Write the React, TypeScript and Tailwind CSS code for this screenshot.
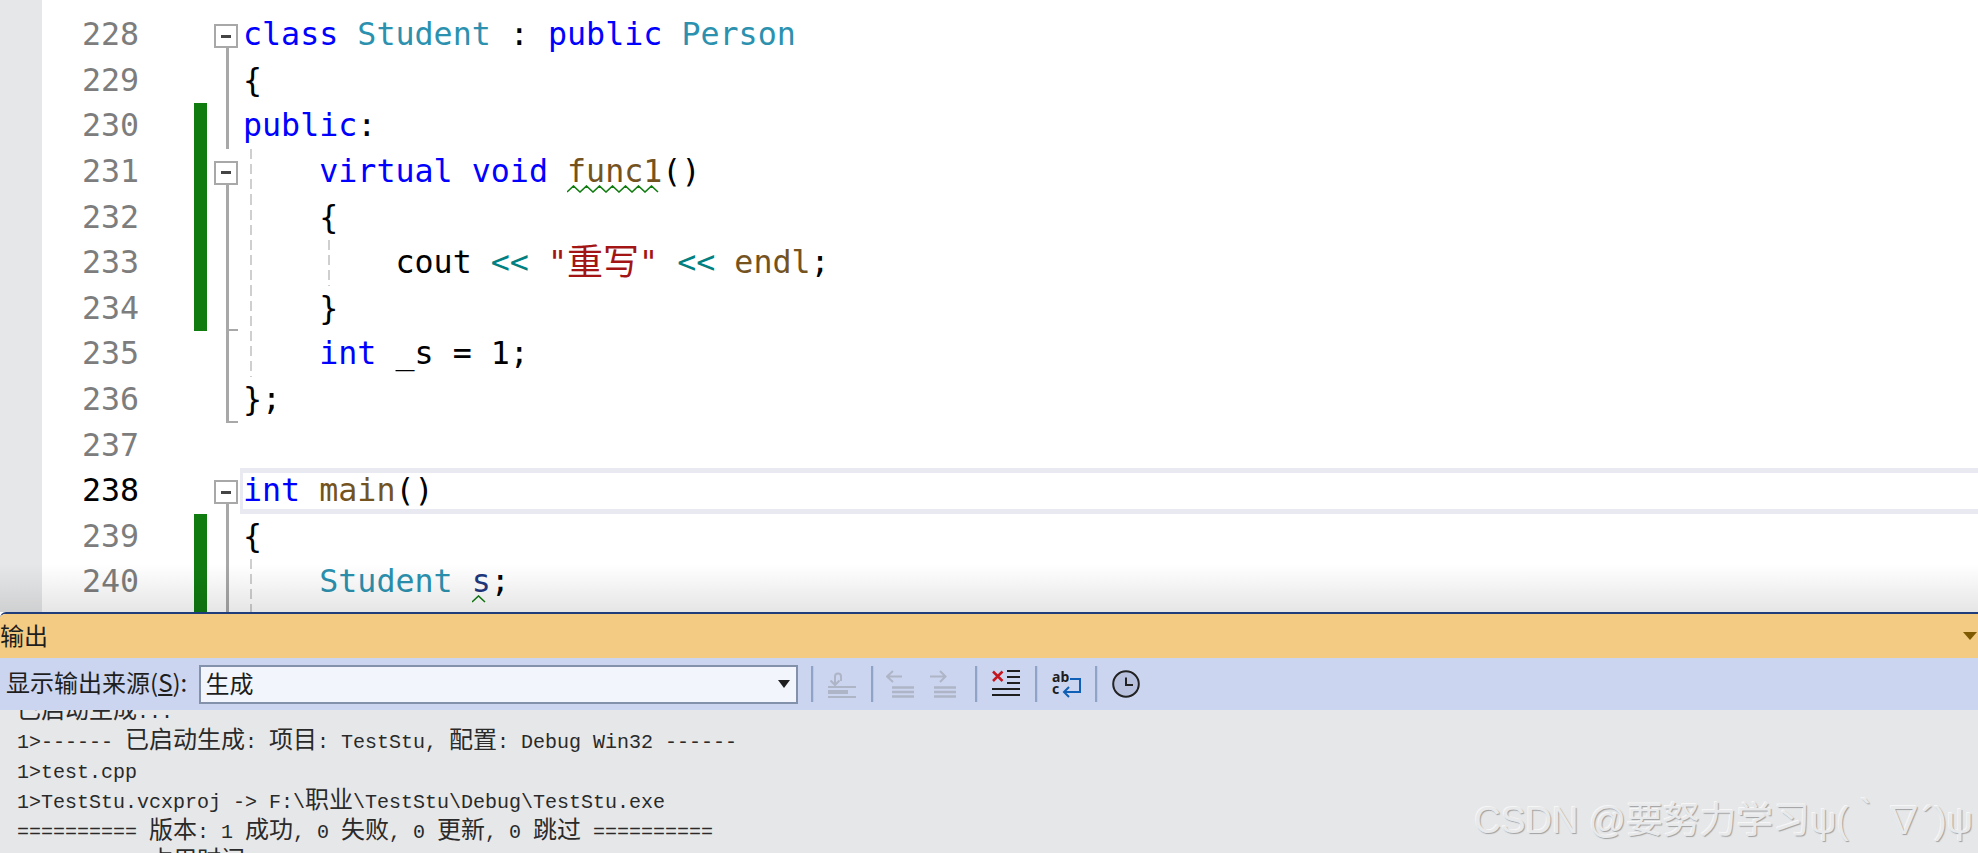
const KW = 'text-[#0000ff]';
const TYPE = 'text-[#2b91af]';
const FN = 'text-[#74531f]';
const STR = 'text-[#a31515]';
const STR_CN = 'text-[#a31515] text-[36px]';
const OP = 'text-[#008080]';
const VAR = 'text-[#1f377f]';
const PLAIN = 'text-black';

type Token = [string, string, boolean?];
type Fold = 'none' | 'box' | 'line' | 'tick' | 'endTick';

interface CodeRow {
  num: number;
  changed?: boolean;
  fold: Fold;
  guideA?: boolean;
  guideB?: boolean;
  current?: boolean;
  tokens: Token[];
}

const rows: CodeRow[] = [
  { num: 228, fold: 'box', tokens: [['class', KW], [' ', PLAIN], ['Student', TYPE], [' : ', PLAIN], ['public', KW], [' ', PLAIN], ['Person', TYPE]] },
  { num: 229, fold: 'line', tokens: [['{', PLAIN]] },
  { num: 230, changed: true, fold: 'line', tokens: [['public', KW], [':', PLAIN]] },
  { num: 231, changed: true, fold: 'box', guideA: true, tokens: [['    ', PLAIN], ['virtual', KW], [' ', PLAIN], ['void', KW], [' ', PLAIN], ['func1', FN, true], ['()', PLAIN]] },
  { num: 232, changed: true, fold: 'line', guideA: true, tokens: [['    {', PLAIN]] },
  { num: 233, changed: true, fold: 'line', guideA: true, guideB: true, tokens: [['        cout ', PLAIN], ['<<', OP], [' ', PLAIN], ['"', STR], ['重写', STR_CN], ['"', STR], [' ', PLAIN], ['<<', OP], [' ', PLAIN], ['endl', FN], [';', PLAIN]] },
  { num: 234, changed: true, fold: 'tick', guideA: true, tokens: [['    }', PLAIN]] },
  { num: 235, fold: 'line', guideA: true, tokens: [['    ', PLAIN], ['int', KW], [' _s = 1;', PLAIN]] },
  { num: 236, fold: 'endTick', tokens: [['};', PLAIN]] },
  { num: 237, fold: 'none', tokens: [] },
  { num: 238, fold: 'box', current: true, tokens: [['int', KW], [' ', PLAIN], ['main', FN], ['()', PLAIN]] },
  { num: 239, changed: true, fold: 'line', tokens: [['{', PLAIN]] },
  { num: 240, changed: true, fold: 'line', guideA: true, tokens: [['    ', PLAIN], ['Student', TYPE], [' ', PLAIN], ['s', VAR, true], [';', PLAIN]] },
  { num: 241, changed: true, fold: 'line', guideA: true, tokens: [] },
];

const guideBg =
  'bg-[repeating-linear-gradient(to_bottom,#cfcfcf_0,#cfcfcf_10px,transparent_10px,transparent_15px)]';

function Squiggle({ word }: { word: string }) {
  const w = word.length * 19 - 3;
  const step = 6.5;
  let points = '';
  for (let i = 0; i * step <= w; i++) {
    points += `${i * step},${i % 2 === 0 ? 7 : 1} `;
  }
  return (
    <svg className="absolute left-0 top-[37px]" width={w} height="8" viewBox={`0 0 ${w} 8`}>
      <polyline points={points} fill="none" stroke="#107c10" strokeWidth="1.6" />
    </svg>
  );
}

function FoldCell({ fold }: { fold: Fold }) {
  if (fold === 'none') return <div className="w-[26px] shrink-0" />;
  return (
    <div className="relative w-[26px] shrink-0">
      {fold === 'box' ? (
        <>
          <div className="absolute left-0 top-[12px] z-10 flex h-[24px] w-[24px] items-center justify-center border-2 border-[#a8a8a8] bg-white">
            <div className="h-[3px] w-[10px] bg-[#444444]" />
          </div>
          <div className="absolute bottom-0 left-[12px] top-[36px] w-[3px] bg-[#a8a8a8]" />
        </>
      ) : (
        <div className="absolute inset-y-0 left-[12px] w-[3px] bg-[#a8a8a8]" />
      )}
      {(fold === 'tick' || fold === 'endTick') && (
        <div className="absolute bottom-0 left-[12px] h-[2px] w-[12px] bg-[#a8a8a8]" />
      )}
    </div>
  );
}

function EditorRow({ row }: { row: CodeRow }) {
  return (
    <div className="flex h-[45.6px] shrink-0">
      <div className={`ml-[82px] w-[57px] shrink-0 text-left leading-[45.6px] ${row.current ? 'text-black' : 'text-[#7d7d7d]'}`}>
        {row.num}
      </div>
      <div className="ml-[55px] w-[13px] shrink-0">
        {row.changed && <div className="h-full bg-[#107c10]" />}
      </div>
      <div className="ml-[7px] flex shrink-0">
        <FoldCell fold={row.fold} />
      </div>
      <div className={`relative flex flex-1 items-center whitespace-pre ${row.current ? 'border-y-[5px] border-l-[3px] border-[#e9e9f2]' : 'pl-[3px]'}`}>
        {row.guideA && <div className={`absolute inset-y-0 left-[10px] w-[2px] ${guideBg}`} />}
        {row.guideB && <div className={`absolute inset-y-0 left-[88px] w-[2px] ${guideBg}`} />}
        {row.tokens.map((t, i) => (
          <span key={i} className={`relative ${t[1]}`}>
            {t[0]}
            {t[2] && <Squiggle word={t[0]} />}
          </span>
        ))}
      </div>
    </div>
  );
}

function Cn({ children }: { children: string }) {
  return <span className="font-['Noto_Sans_CJK_SC'] text-[24px] leading-[0] font-normal">{children}</span>;
}

function Separator() {
  return <div className="h-[36px] w-[3px] shrink-0 border-r border-[#bcc8e4] bg-[#8fa3c9]" />;
}

function WrapIcon() {
  return (
    <svg width="28" height="28" viewBox="0 0 28 28" className="shrink-0" fill="none" stroke="#aeb5c6" strokeWidth="2">
      <path d="M13 11V6.5a3 3 0 0 0-6 0V15" />
      <path d="M2.5 10.5 7 15l4.5-4.5" />
      <path d="M0 17h28M0 27h28" />
      <path d="M0 22h20" strokeWidth="4" />
    </svg>
  );
}

function PrevIcon() {
  return (
    <svg width="28" height="28" viewBox="0 0 28 28" className="shrink-0" fill="none" stroke="#aeb5c6" strokeWidth="2">
      <path d="M1 6.5h15M7 1 1 6.5 7 12" />
      <path d="M6 17.5h22M6 22h22M6 26.5h22" strokeWidth="2.5" />
    </svg>
  );
}

function NextIcon() {
  return (
    <svg width="26" height="28" viewBox="0 0 26 28" className="shrink-0" fill="none" stroke="#aeb5c6" strokeWidth="2">
      <path d="M0 6.5h15M10 1l5.5 5.5L10 12" />
      <path d="M4 17.5h22M4 22h22M4 26.5h22" strokeWidth="2.5" />
    </svg>
  );
}

function ClearIcon() {
  return (
    <svg width="28" height="28" viewBox="0 0 28 28" className="shrink-0" fill="none">
      <path d="M1 1.5 10.5 11M10.5 1.5 1 11" stroke="#c5151f" strokeWidth="2.5" />
      <path d="M15 1h13M15 7h13M15 13h13M0 19h28M0 25h28" stroke="#1e1e1e" strokeWidth="2" />
    </svg>
  );
}

function TextWrapIcon() {
  return (
    <svg width="29" height="28" viewBox="0 0 29 28" className="shrink-0" fill="none">
      <text x="0" y="12" fontFamily="'Noto Sans'" fontSize="14" fontWeight="700" fill="#1e1e1e">ab</text>
      <text x="0" y="24" fontFamily="'Noto Sans'" fontSize="14" fontWeight="700" fill="#1e1e1e">c</text>
      <path d="M18 9h10v13H12M17 17l-5 5 5 5" stroke="#0e5fb5" strokeWidth="2" />
    </svg>
  );
}

function ClockIcon() {
  return (
    <svg width="28" height="28" viewBox="0 0 28 28" className="shrink-0">
      <circle cx="14" cy="14" r="12.8" fill="#b8c2de" stroke="#222222" strokeWidth="2" />
      <path d="M14 7.5V15h7" fill="none" stroke="#222222" strokeWidth="2" />
    </svg>
  );
}

export default function App() {
  return (
    <div className="relative flex h-[853px] w-full flex-col overflow-hidden bg-white font-['DejaVu_Sans_Mono','Noto_Sans_CJK_SC',monospace] text-[31.67px]">
      <div className="relative h-[612px] shrink-0 overflow-hidden">
        <div className="absolute inset-y-0 left-0 w-[42px] bg-[#e6e7e8]" />
        <div className="relative flex flex-col pt-[12.2px]">
          {rows.map(row => (
            <EditorRow key={row.num} row={row} />
          ))}
        </div>
        <div className="pointer-events-none absolute inset-x-0 bottom-0 h-[48px] bg-gradient-to-b from-transparent to-black/10" />
      </div>

      <div className="flex flex-1 flex-col overflow-hidden rounded-tl-[6px] border-t-2 border-[#1f3d7a] font-['Noto_Sans_CJK_SC',sans-serif] text-[24px] text-[#1e1e1e]">
        <div className="flex h-[44px] shrink-0 items-center justify-between bg-[#f4cb83]">
          <span className="leading-[32px] pb-[2px]">输出</span>
          <div className="mr-[1px] h-0 w-0 border-x-[7px] border-t-[8px] border-x-transparent border-t-[#7f5a00]" />
        </div>

        <div className="flex h-[52px] shrink-0 items-center bg-[#cbd5ef] pl-[6px]">
          <span className="w-[192.5px] shrink-0 whitespace-pre pb-[4px] leading-[32px]">
            显示输出来源(<span className="underline">S</span>):
          </span>
          <div className="flex h-[39px] w-[599px] shrink-0 items-center justify-between border-2 border-[#8391ab] bg-[#f2f5fc] pl-[5px] pr-[6px]">
            <span className="pb-[3px] leading-[32px]">生成</span>
            <div className="h-0 w-0 border-x-[6px] border-t-[8px] border-x-transparent border-t-[#1e1e1e]" />
          </div>
          <div className="ml-[13px] flex items-center">
            <Separator />
            <div className="ml-[14px]"><WrapIcon /></div>
            <div className="ml-[15px]"><Separator /></div>
            <div className="ml-[12px]"><PrevIcon /></div>
            <div className="ml-[16px]"><NextIcon /></div>
            <div className="ml-[19px]"><Separator /></div>
            <div className="ml-[14px]"><ClearIcon /></div>
            <div className="ml-[15px]"><Separator /></div>
            <div className="ml-[14px]"><TextWrapIcon /></div>
            <div className="ml-[14px]"><Separator /></div>
            <div className="ml-[14px]"><ClockIcon /></div>
          </div>
        </div>

        <div className="flex-1 overflow-hidden bg-[#e6e7e9] pl-[17px] font-['Liberation_Mono',monospace] text-[20px] text-[#2a2a2a]">
          <div className="-mt-[12px] whitespace-pre [&>div]:h-[30px] [&>div]:leading-[30px]">
            <div><Cn>已启动生成</Cn>...</div>
            <div>1&gt;------ <Cn>已启动生成</Cn>: <Cn>项目</Cn>: TestStu, <Cn>配置</Cn>: Debug Win32 ------</div>
            <div>1&gt;test.cpp</div>
            <div>1&gt;TestStu.vcxproj -&gt; F:\<Cn>职业</Cn>\TestStu\Debug\TestStu.exe</div>
            <div>========== <Cn>版本</Cn>: 1 <Cn>成功</Cn>, 0 <Cn>失败</Cn>, 0 <Cn>更新</Cn>, 0 <Cn>跳过</Cn> ==========</div>
            <div>========== <Cn>占用时间</Cn> 00:00.456 ==========</div>
          </div>
        </div>
      </div>

      <div className="pointer-events-none absolute bottom-[10px] right-[5px] whitespace-pre font-['Liberation_Sans','Noto_Sans_CJK_SC',sans-serif] text-[36.8px] leading-[44px] text-[#e8e9eb] [text-shadow:1px_1px_1px_#a0a0a0,-1px_-1px_0_#f6f6f6]">
        CSDN @要努力学习ψ(｀∇´)ψ
      </div>
    </div>
  );
}
